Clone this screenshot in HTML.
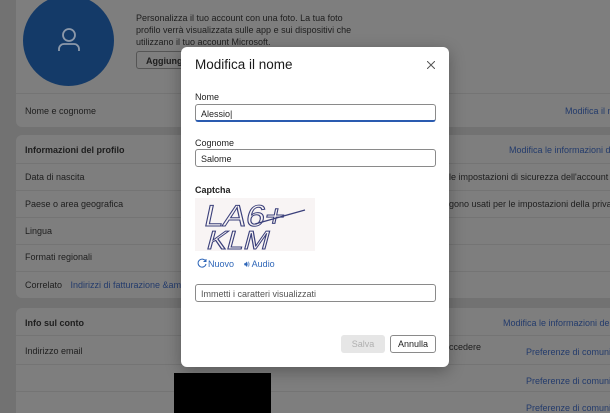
<!DOCTYPE html>
<html><head><meta charset="utf-8"><style>
*{box-sizing:border-box;margin:0;padding:0}
html,body{width:610px;height:413px;overflow:hidden;background:#727272}
body{font-family:"Liberation Sans",sans-serif;position:relative;color:#1e1e1e}
.card{position:absolute;left:16px;width:594px;background:#7e7e7e;border-radius:6px 0 0 6px}
.t{position:absolute;font-size:9px;white-space:nowrap}
.ln{position:absolute;left:16px;width:594px;height:1px;background:#747474}
.lk{color:#233b6c}
.dlg{position:absolute;left:181px;top:47px;width:268px;height:320px;background:#fff;border-radius:6px;box-shadow:0 4px 16px rgba(0,0,0,.3)}
.d{position:absolute;white-space:nowrap;font-size:9px;color:#222}
.in{position:absolute;left:14px;width:241px;height:18px;border:1px solid #8a8a8a;border-radius:3px;font-size:9px;padding:4px 5px;color:#222}
</style></head><body>
<div class="card" style="top:-10px;height:137px"></div>
<div style="position:absolute;left:23px;top:-5px;width:91px;height:91px;border-radius:50%;background:#143a68"></div>
<svg style="position:absolute;left:56px;top:27px" width="26" height="26" viewBox="0 0 26 26" fill="none" stroke="#8d99aa" stroke-width="1.8"><circle cx="13" cy="8" r="6"/><path d="M3 24v-2a5 5 0 0 1 5-5h10a5 5 0 0 1 5 5v2"/></svg>
<div class="t" style="left:136px;top:12px;line-height:12px">Personalizza il tuo account con una foto. La tua foto<br>profilo verrà visualizzata sulle app e sui dispositivi che<br>utilizzano il tuo account Microsoft.</div>
<div style="position:absolute;left:136px;top:51px;width:60px;height:18px;border:1px solid #555;border-radius:3px;font-size:9px;padding:4px 9px;font-weight:bold">Aggiungi</div>
<div class="ln" style="top:93px"></div>
<div class="t" style="left:25px;top:106px">Nome e cognome</div>
<div class="t lk" style="left:565px;top:106px">Modifica il n</div>
<div class="card" style="top:135px;height:163px"></div>
<div class="t" style="left:25px;top:145px;font-weight:bold">Informazioni del profilo</div>
<div class="t lk" style="left:509px;top:145px">Modifica le informazioni d</div>
<div class="ln" style="top:163px"></div>
<div class="t" style="left:25px;top:172px">Data di nascita</div>
<div class="t" style="left:449px;top:172px">le impostazioni di sicurezza dell'account</div>
<div class="ln" style="top:190px"></div>
<div class="t" style="left:25px;top:199px">Paese o area geografica</div>
<div class="t" style="left:449px;top:199px">gono usati per le impostazioni della priva</div>
<div class="ln" style="top:217px"></div>
<div class="t" style="left:25px;top:226px">Lingua</div>
<div class="ln" style="top:244px"></div>
<div class="t" style="left:25px;top:252px">Formati regionali</div>
<div class="ln" style="top:271px"></div>
<div class="t" style="left:25px;top:280px">Correlato <span class="lk" style="margin-left:6px">Indirizzi di fatturazione &amp;amp</span></div>
<div class="card" style="top:308px;height:120px"></div>
<div class="t" style="left:25px;top:318px;font-weight:bold">Info sul conto</div>
<div class="t lk" style="left:503px;top:318px">Modifica le informazioni de</div>
<div class="ln" style="top:335px"></div>
<div class="t" style="left:25px;top:346px">Indirizzo email</div>
<div class="t" style="left:449px;top:342px">ccedere</div>
<div class="t lk" style="left:526px;top:347px">Preferenze di comuni</div>
<div class="ln" style="top:364px"></div>
<div class="t lk" style="left:526px;top:376px">Preferenze di comuni</div>
<div class="ln" style="top:391px"></div>
<div class="t lk" style="left:526px;top:403px">Preferenze di comuni</div>
<div style="position:absolute;left:174px;top:373px;width:97px;height:40px;background:#000"></div>

<div class="dlg">
<div class="d" style="left:14px;top:10px;font-size:13.5px;color:#1a1a1a">Modifica il nome</div>
<svg style="position:absolute;left:246px;top:14px" width="8" height="8" viewBox="0 0 8 8" stroke="#555" stroke-width="1"><path d="M0 0L8 8M8 0L0 8"/></svg>
<div class="d" style="left:14px;top:45px">Nome</div>
<div class="in" style="top:57px;border-bottom:2px solid #2a5bb0">Alessio|</div>
<div class="d" style="left:14px;top:91px">Cognome</div>
<div class="in" style="top:102px">Salome</div>
<div class="d" style="left:14px;top:138px;font-weight:bold">Captcha</div>
<div style="position:absolute;left:14px;top:151px;width:120px;height:53px;background:#f8f4f4"></div>
<svg style="position:absolute;left:14px;top:151px" width="120" height="53" viewBox="0 0 120 53">
<text x="14" y="28" font-family="Liberation Sans" font-size="30" fill="none" stroke="#3a3f7a" stroke-width="1" transform="skewX(-12)" textLength="80" lengthAdjust="spacingAndGlyphs">LA6+</text>
<text x="24" y="51" font-family="Liberation Sans" font-size="26" fill="none" stroke="#3a3f7a" stroke-width="1" transform="skewX(-15)" textLength="62" lengthAdjust="spacingAndGlyphs">KLM</text>
<path d="M60 26 L110 12" stroke="#3a3f7a" stroke-width="1.2"/>
</svg>
<svg style="position:absolute;left:16px;top:211px" width="10" height="10" viewBox="0 0 10 10" fill="none" stroke="#2e66b8" stroke-width="1"><path d="M8.5 3A4 4 0 1 0 9 6M9 1v2.5H6.5"/></svg>
<div class="d" style="left:27px;top:212px;color:#2e66b8">Nuovo</div>
<div class="d" style="left:63px;top:212px;color:#2e66b8">🔊︎ Audio</div>
<div class="in" style="top:237px;color:#555">Immetti i caratteri visualizzati</div>
<div style="position:absolute;left:160px;top:288px;width:44px;height:18px;background:#e6e6e6;border-radius:3px;font-size:9px;color:#b0b0b0;text-align:center;line-height:18px">Salva</div>
<div style="position:absolute;left:209px;top:288px;width:46px;height:18px;border:1px solid #8a8a8a;border-radius:3px;font-size:9px;color:#222;text-align:center;line-height:16px">Annulla</div>
</div>
</body></html>
